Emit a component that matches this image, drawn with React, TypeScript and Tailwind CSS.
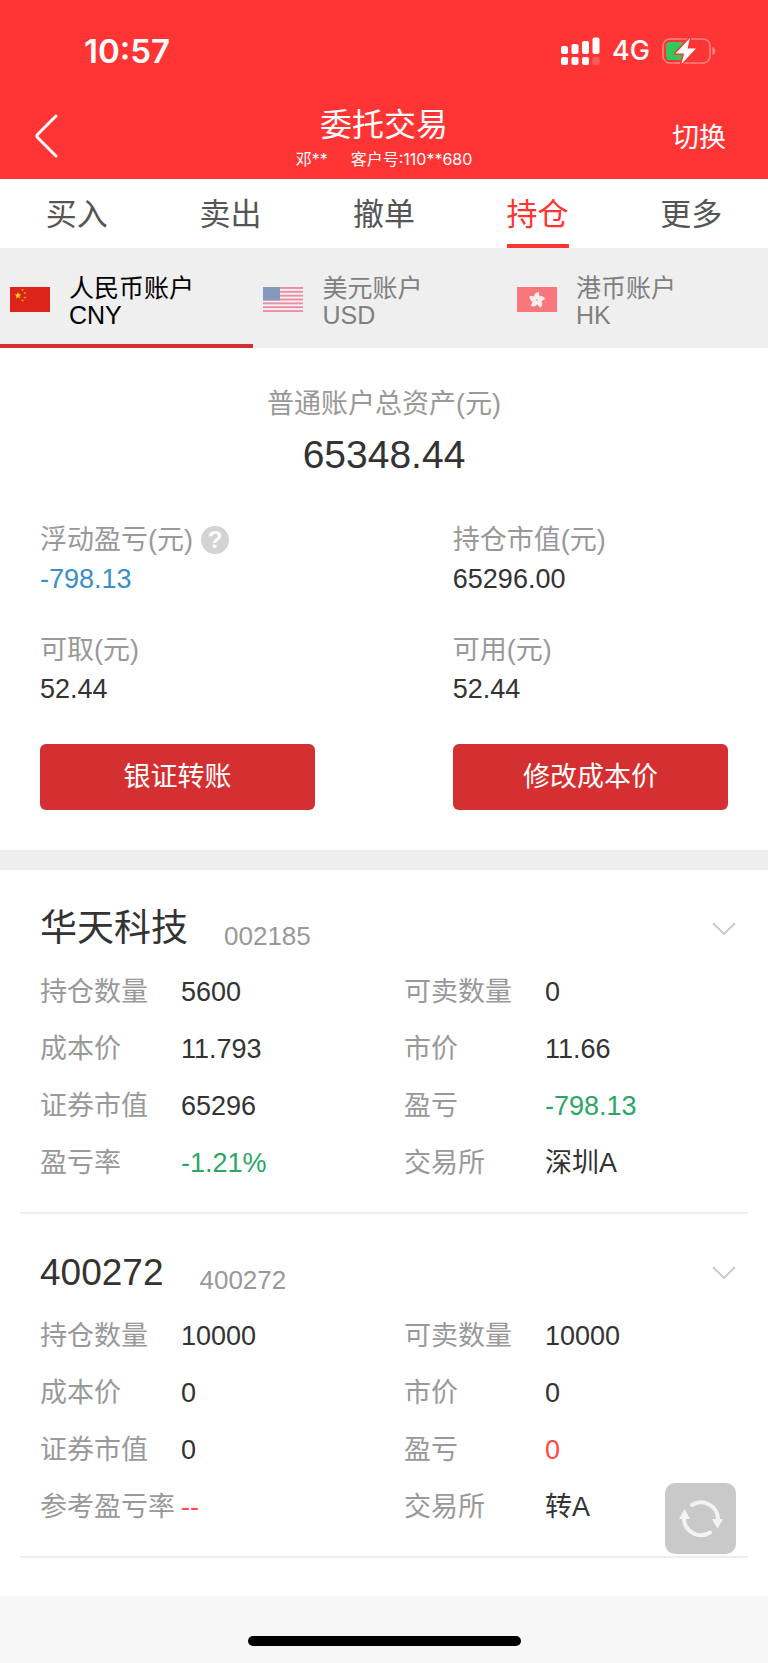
import { useState } from 'react';

interface Field {
  label: string;
  value: string;
  tone?: 'up' | 'down';
}

interface Holding {
  name: string;
  code: string;
  fields: Field[];
}

const TABS = ['买入', '卖出', '撤单', '持仓', '更多'];

const ACCOUNTS = [
  { id: 'CNY', name: '人民币账户', Flag: FlagCN },
  { id: 'USD', name: '美元账户', Flag: FlagUS },
  { id: 'HK', name: '港币账户', Flag: FlagHK },
];

const HOLDINGS: Holding[] = [
  {
    name: '华天科技',
    code: '002185',
    fields: [
      { label: '持仓数量', value: '5600' },
      { label: '可卖数量', value: '0' },
      { label: '成本价', value: '11.793' },
      { label: '市价', value: '11.66' },
      { label: '证券市值', value: '65296' },
      { label: '盈亏', value: '-798.13', tone: 'down' },
      { label: '盈亏率', value: '-1.21%', tone: 'down' },
      { label: '交易所', value: '深圳A' },
    ],
  },
  {
    name: '400272',
    code: '400272',
    fields: [
      { label: '持仓数量', value: '10000' },
      { label: '可卖数量', value: '10000' },
      { label: '成本价', value: '0' },
      { label: '市价', value: '0' },
      { label: '证券市值', value: '0' },
      { label: '盈亏', value: '0', tone: 'up' },
      { label: '参考盈亏率', value: '--', tone: 'up' },
      { label: '交易所', value: '转A' },
    ],
  },
];

// Five-pointed star as polygon points
function star(cx: number, cy: number, r: number) {
  const pts: string[] = [];
  for (let i = 0; i < 10; i++) {
    const rad = i % 2 === 0 ? r : r * 0.4;
    const a = (Math.PI / 5) * i - Math.PI / 2;
    pts.push(`${cx + rad * Math.cos(a)},${cy + rad * Math.sin(a)}`);
  }
  return pts.join(' ');
}

function FlagCN() {
  return (
    <svg className="h-[25px] w-10 shrink-0" viewBox="0 0 40 25" aria-hidden="true">
      <rect width="40" height="25" fill="#dc241c" />
      <polygon points={star(8, 8.5, 3.6)} fill="#ffe000" />
      <polygon points={star(12.5, 3, 1.5)} fill="#f5b512" />
      <polygon points={star(15, 6, 1.5)} fill="#f5b512" />
      <polygon points={star(15, 10.5, 1.5)} fill="#f5b512" />
      <polygon points={star(12.5, 13.5, 1.5)} fill="#f5b512" />
    </svg>
  );
}

function FlagUS() {
  return (
    <svg className="h-[25px] w-10 shrink-0" viewBox="0 0 40 26" preserveAspectRatio="none" aria-hidden="true">
      <rect width="40" height="26" fill="#f7eff0" />
      {[0, 1, 2, 3, 4, 5, 6].map((i) => (
        <rect key={i} y={i * 4} width="40" height="2" fill="#e88fa3" />
      ))}
      <rect width="17" height="14" fill="#849abd" />
    </svg>
  );
}

function FlagHK() {
  return (
    <svg className="h-[25px] w-10 shrink-0" viewBox="0 0 40 25" aria-hidden="true">
      <rect width="40" height="25" fill="#f8767c" />
      {[10, 82, 154, 226, 298].map((deg) => (
        <path
          key={deg}
          d="M20 12.500 C15 11.500 15.500 6 20.500 4.500 C20 7 24 9 20 12.500 Z"
          fill="#fdeeee"
          transform={`rotate(${deg} 20 13)`}
        />
      ))}
    </svg>
  );
}

function SignalIcon() {
  return (
    <svg className="h-7 w-[39px]" viewBox="0 0 39 28" fill="#fff" aria-hidden="true">
      <rect x="0" y="9" width="7" height="8" rx="2" />
      <rect x="10.5" y="7" width="7" height="10" rx="2" />
      <rect x="21" y="4" width="7" height="13" rx="2" />
      <rect x="31.5" y="0.500" width="7" height="16.500" rx="2" />
      <rect x="0" y="20" width="7" height="8" rx="2" />
      <rect x="10.5" y="20" width="7" height="8" rx="2" />
      <rect x="21" y="20" width="7" height="8" rx="2" />
      <rect x="31.5" y="20" width="7" height="8" rx="2" opacity="0.2" />
    </svg>
  );
}

function BatteryIcon() {
  return (
    <svg className="h-7 w-[54px]" viewBox="0 0 54 28" aria-hidden="true">
      <rect x="1" y="2" width="47" height="24" rx="7" fill="none" stroke="#fff" strokeOpacity="0.4" strokeWidth="1.500" />
      <path d="M50.500 10 C54 11.500 54 16.500 50.500 18 Z" fill="#fff" fillOpacity="0.45" />
      <path d="M8 5 H21 V23 H8 Q4 23 4 19 V9 Q4 5 8 5 Z" fill="#34c759" />
      <path
        d="M28 1 L13.500 16.500 H22 L19.500 27 L34 11.500 H25.500 Z"
        fill="#fff"
        stroke="#ff3434"
        strokeWidth="3"
        strokeLinejoin="round"
        paintOrder="stroke"
      />
    </svg>
  );
}

function RefreshIcon() {
  return (
    <svg className="h-[71px] w-[71px]" viewBox="0 0 71 71" aria-hidden="true">
      <path d="M27 22 A17 17 0 0 1 53 36" fill="none" stroke="#f3f3f3" strokeWidth="4" strokeLinecap="round" />
      <path d="M45 49.500 A17 17 0 0 1 19 36" fill="none" stroke="#f3f3f3" strokeWidth="4" strokeLinecap="round" />
      <path d="M47 36 H58 L52.500 46 Z" fill="#f3f3f3" />
      <path d="M14 36 H25 L19.500 26 Z" fill="#f3f3f3" />
    </svg>
  );
}

function Header() {
  return (
    <header className="bg-[#ff3434] text-white">
      <div className="flex h-24 items-center justify-between pt-1.5 pr-[52px] pl-[84px] font-['Inter',sans-serif]">
        <span className="text-[33px] leading-10 font-semibold">10:57</span>
        <div className="flex items-center gap-3">
          <SignalIcon />
          <span className="text-[27px] leading-8 font-medium">4G</span>
          <BatteryIcon />
        </div>
      </div>
      <div className="grid h-[83px] grid-cols-[1fr_auto_1fr] items-center px-[34px]">
        <button type="button" aria-label="返回" className="justify-self-start pb-1">
          <svg className="h-11 w-6" viewBox="0 0 24 44" fill="none" stroke="#fff" strokeWidth="3" aria-hidden="true">
            <path d="M22 2 L4 20 Q2 22 4 24 L22 42" strokeLinecap="round" />
          </svg>
        </button>
        <div className="pt-0.5 text-center">
          <h1 className="text-[32px] leading-10">委托交易</h1>
          <p className="flex justify-center gap-[23px] font-['Inter','Noto_Sans_CJK_SC',sans-serif] text-base leading-7">
            <span>邓**</span>
            <span>客户号:110**680</span>
          </p>
        </div>
        <button type="button" className="justify-self-end pr-2 text-[27px] leading-9">
          切换
        </button>
      </div>
    </header>
  );
}

function HoldingCard({ holding }: { holding: Holding }) {
  return (
    <article className="mx-5 border-b-2 border-[#eee] pt-9 pb-[21px] pl-5">
      <div className="flex items-center justify-between pr-3">
        <div className="flex items-end gap-9">
          <h2 className="text-[37px] leading-[46px]">{holding.name}</h2>
          <span className="text-[26px] leading-8 text-[#999]">{holding.code}</span>
        </div>
        <button type="button" aria-label={`展开 ${holding.code}`}>
          <svg className="h-4 w-6" viewBox="0 0 24 16" fill="none" stroke="#ccc" strokeWidth="2" aria-hidden="true">
            <path d="M1 2 L12 13 L23 2" />
          </svg>
        </button>
      </div>
      <dl className="-mr-5 mt-[11px] grid grid-cols-2">
        {holding.fields.map((f) => (
          <div key={f.label} className="flex h-[57px] items-center leading-9">
            <dt className="w-[141px] shrink-0 text-[27px] whitespace-nowrap text-[#999]">{f.label}</dt>
            <dd
              className={`text-[27px] ${
                f.tone === 'up' ? 'text-[#ff4a4a]' : f.tone === 'down' ? 'text-[#2aa765]' : ''
              }`}
            >
              {f.value}
            </dd>
          </div>
        ))}
      </dl>
    </article>
  );
}

function SummaryItem({ label, value, help, blue }: { label: string; value: string; help?: boolean; blue?: boolean }) {
  return (
    <div className="w-[40%]">
      <div className="flex h-10 items-center gap-2 text-[27px] text-[#999]">
        <span className="whitespace-nowrap">{label}</span>
        {help && (
          <button
            type="button"
            aria-label="说明"
            className="flex h-7 w-7 items-center justify-center rounded-full bg-[#d3d3d3] text-[24px] leading-7 font-bold text-white"
          >
            ?
          </button>
        )}
      </div>
      <div className={`text-[27px] leading-[38px] ${blue ? 'text-[#3a8fcb]' : ''}`}>{value}</div>
    </div>
  );
}

export default function App() {
  const [tab, setTab] = useState('持仓');
  const [account, setAccount] = useState('CNY');

  return (
    <div className="min-h-screen bg-[#f7f7f7] font-['Liberation_Sans','Noto_Sans_CJK_SC',sans-serif] text-[#333]">
      <Header />

      <nav className="flex h-[69px] bg-white">
        {TABS.map((t) => (
          <button key={t} type="button" onClick={() => setTab(t)} className="flex flex-1 justify-center">
            <span
              className={`h-full border-b-4 text-[31px] leading-[72px] ${
                t === tab ? 'border-[#ff3434] text-[#ff3434]' : 'border-transparent text-[#555]'
              }`}
            >
              {t}
            </span>
          </button>
        ))}
      </nav>

      <div className="flex h-[100px] bg-[#efefef]">
        {ACCOUNTS.map(({ id, name, Flag }) => (
          <button
            key={id}
            type="button"
            onClick={() => setAccount(id)}
            className={`flex w-[33%] items-center gap-[19px] border-b-4 pt-1.5 pl-[10px] text-left text-[25px] leading-[27px] ${
              id === account ? 'border-[#d53031] text-black' : 'border-transparent text-[#808080]'
            }`}
          >
            <Flag />
            <span className="pt-1.5">
              {name}
              <br />
              {id}
            </span>
          </button>
        ))}
      </div>

      <main className="relative bg-white pb-[38px]">
        <section className="px-10 pt-9 pb-10">
          <p className="text-center text-[27px] leading-10 text-[#999]">普通账户总资产(元)</p>
          <p className="mt-1 text-center text-[39px] leading-[54px]">65348.44</p>

          <div className="mt-[38px] flex justify-between">
            <SummaryItem label="浮动盈亏(元)" value="-798.13" help blue />
            <SummaryItem label="持仓市值(元)" value="65296.00" />
          </div>
          <div className="mt-8 flex justify-between">
            <SummaryItem label="可取(元)" value="52.44" />
            <SummaryItem label="可用(元)" value="52.44" />
          </div>

          <div className="mt-9 flex justify-between text-[27px] text-white">
            <button type="button" className="h-[66px] w-[40%] rounded-md bg-[#d53031]">
              银证转账
            </button>
            <button type="button" className="h-[66px] w-[40%] rounded-md bg-[#d53031]">
              修改成本价
            </button>
          </div>
        </section>

        <div className="h-5 bg-[#eee]" />

        {HOLDINGS.map((h) => (
          <HoldingCard key={h.code} holding={h} />
        ))}

        <button
          type="button"
          aria-label="刷新"
          className="absolute right-8 bottom-[42px] rounded-[10px] bg-[#c9c9c9]"
        >
          <RefreshIcon />
        </button>
      </main>

      <footer className="flex h-[67px] items-end justify-center pb-[17px]">
        <div className="h-[10px] w-[273px] rounded-full bg-black" />
      </footer>
    </div>
  );
}
